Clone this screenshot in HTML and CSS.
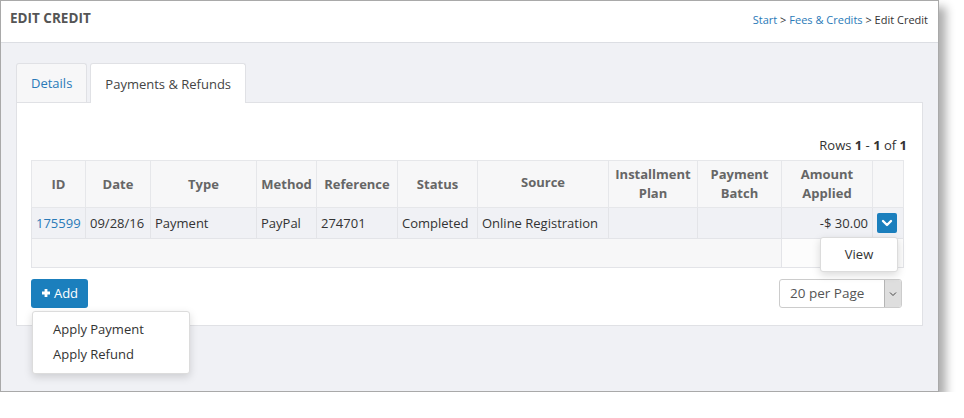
FILE: index.html
```html
<!DOCTYPE html>
<html lang="en">
<head>
  <meta charset="UTF-8">
  <title>Edit Credit</title>
  <link rel="stylesheet" href="styles.css">
</head>
<body>

  <div class="window">
    <div class="page-header">
      <h1>EDIT CREDIT</h1>
      <div class="crumbs">
        <a href="#">Start</a> &gt; <a href="#">Fees &amp; Credits</a> &gt; Edit Credit
      </div>
    </div>

    <div class="content">
      <ul class="tabs">
        <li><a href="#">Details</a></li>
        <li class="active"><a href="#">Payments &amp; Refunds</a></li>
      </ul>

      <div class="panel">
        <div class="rows-info">Rows <b>1</b> - <b>1</b> of <b>1</b></div>

        <table class="grid">
          <colgroup>
            <col class="c-id"><col class="c-date"><col class="c-type"><col class="c-method">
            <col class="c-ref"><col class="c-status"><col class="c-source"><col class="c-plan">
            <col class="c-batch"><col class="c-amount"><col class="c-act">
          </colgroup>
          <thead>
            <tr>
              <th>ID</th>
              <th>Date</th>
              <th>Type</th>
              <th>Method</th>
              <th>Reference</th>
              <th>Status</th>
              <th class="up">Source</th>
              <th>Installment<br>Plan</th>
              <th>Payment<br>Batch</th>
              <th>Amount<br>Applied</th>
              <th></th>
            </tr>
          </thead>
          <tbody>
            <tr class="data">
              <td><a href="#">175599</a></td>
              <td>09/28/16</td>
              <td>Payment</td>
              <td>PayPal</td>
              <td>274701</td>
              <td>Completed</td>
              <td>Online Registration</td>
              <td></td>
              <td></td>
              <td class="num">-$ 30.00</td>
              <td class="act">
                <span class="toggle">
                  <svg width="12" height="12" viewBox="0 0 12 12"><path d="M2 4 L6 8 L10 4" fill="none" stroke="#fff" stroke-width="2.4" stroke-linecap="round" stroke-linejoin="round"/></svg>
                </span>
                <div class="menu view-menu"><a href="#">View</a></div>
              </td>
            </tr>
            <tr class="foot">
              <td colspan="9"></td>
              <td colspan="2" class="blank"></td>
            </tr>
          </tbody>
        </table>

        <div class="bottom">
          <div class="add-wrap">
            <button class="btn-add">
              <svg width="10" height="10" viewBox="0 0 10 10"><path d="M5 1 V9 M1 5 H9" stroke="#fff" stroke-width="2.8"/></svg>
              Add
            </button>
            <div class="menu add-menu">
              <a href="#">Apply Payment</a>
              <a href="#">Apply Refund</a>
            </div>
          </div>

          <div class="pager">
            <span class="pager-label">20 per Page</span>
            <span class="pager-arrow">
              <svg width="8" height="6" viewBox="0 0 8 6"><path d="M1 1.5 L4 4.5 L7 1.5" fill="none" stroke="#444" stroke-width="1"/></svg>
            </span>
          </div>
        </div>
      </div>
    </div>
  </div>

</body>
</html>
```

FILE: styles.css
```css
body {
  margin: 0; padding: 0;
  background: #fff;
  font-family: 'Open Sans', sans-serif;
  font-size: 13px;
  color: #333;
}
a { color: #2a7ab8; text-decoration: none; }

.window {
  width: 937px; height: 390px;
  border: 1px solid #a9a9a9;
  box-shadow: 7px 7px 9px rgba(0,0,0,0.32);
  display: flex;
  flex-direction: column;
  background: #fff;
}

.page-header {
  height: 41px;
  flex: none;
  border-bottom: 1px solid #dcdee3;
  display: flex;
  align-items: center;
  justify-content: space-between;
  padding: 0 10px 0 9px;
}
.page-header h1 {
  margin: 0 0 7px;
  font-size: 13.5px;
  font-weight: 700;
  color: #555;
}
.crumbs { font-size: 11px; color: #333; margin-bottom: 4px; }

.content {
  flex: 1;
  background: #f0f1f5;
  padding: 20px 15px 0 15px;
}

.tabs {
  list-style: none;
  margin: 0; padding: 0;
  display: flex;
  gap: 3px;
  position: relative;
  z-index: 1;
}
.tabs li {
  border: 1px solid #e0e1e5;
  border-bottom: none;
  border-radius: 3px 3px 0 0;
  background: #f7f7f8;
  height: 38px;
  display: flex;
  align-items: center;
  padding: 0 14px;
}
.tabs li.active {
  background: #fff;
  height: 39px;
  margin-bottom: -1px;
}
.tabs li.active a { color: #444; }

.panel {
  background: #fff;
  border: 1px solid #e0e1e5;
  padding: 32px 15px 17px 14px;
}

.rows-info {
  text-align: right;
  line-height: 20px;
  margin: 0 0 5px;
}

.grid {
  width: 872px;
  border-collapse: collapse;
  table-layout: fixed;
}
.c-id { width: 54px; }
.c-date { width: 65px; }
.c-type { width: 106px; }
.c-method { width: 60px; }
.c-ref { width: 81px; }
.c-status { width: 80px; }
.c-source { width: 131px; }
.c-plan { width: 89px; }
.c-batch { width: 84px; }
.c-amount { width: 91px; }
.c-act { width: 31px; }

.grid th {
  background: #f7f7f8;
  border: 1px solid #e6e7ea;
  height: 42px;
  color: #666;
  font-weight: 700;
  line-height: 19px;
  padding: 0 2px;
  text-align: center;
}
.grid th.up { padding-bottom: 4px; }
.grid tr.data td {
  background: #f0f1f5;
  border: 1px solid #e3e4e8;
  height: 30px;
  padding: 0 4px;
  white-space: nowrap;
}
.grid td.num { text-align: right; }
.grid td.act { position: relative; padding: 0 5px 0 4px; }
.grid tr.foot td {
  background: #f7f7f8;
  border: 1px solid #e3e4e8;
  height: 26px;
}
.grid tr.foot td.blank { background: #fcfcfc; }

.toggle {
  width: 20px; height: 20px;
  border-radius: 2px;
  background: #1b7fbd;
  display: flex;
  align-items: center;
  justify-content: center;
}

.menu {
  position: absolute;
  background: #fff;
  border: 1px solid #dcdcdc;
  border-radius: 3px;
  box-shadow: 0 3px 8px rgba(0,0,0,0.15);
  z-index: 5;
}
.menu a { display: block; color: #333; }
.view-menu {
  top: 29px; right: 5px;
  width: 76px;
  padding: 5px 0 6px;
  text-align: center;
}
.view-menu a { line-height: 22px; }

.bottom {
  width: 872px;
  display: flex;
  justify-content: space-between;
  align-items: flex-start;
  margin-top: 11px;
}
.add-wrap { position: relative; }
.btn-add {
  height: 29px;
  width: 57px;
  border: none;
  border-radius: 3px;
  background: #1b7fbd;
  color: #fff;
  font-family: inherit;
  font-size: 13px;
  padding: 0 0 1px;
  display: flex;
  align-items: center;
  justify-content: center;
  gap: 3px;
}
.add-menu {
  top: 32px; left: 1px;
  width: 156px;
  padding: 5px 0 6px;
}
.add-menu a { padding: 0 20px; line-height: 25px; }

.pager {
  width: 121px; height: 27px;
  border: 1px solid #ccc;
  border-radius: 3px;
  display: flex;
  margin-right: 1px;
  overflow: hidden;
}
.pager-label {
  flex: 1;
  padding-left: 10px;
  line-height: 27px;
  font-size: 13.5px;
  color: #555;
}
.pager-arrow {
  width: 16px;
  background: #dedede;
  border-left: 1px solid #b5b5b5;
  display: flex;
  align-items: center;
  justify-content: center;
}
```
